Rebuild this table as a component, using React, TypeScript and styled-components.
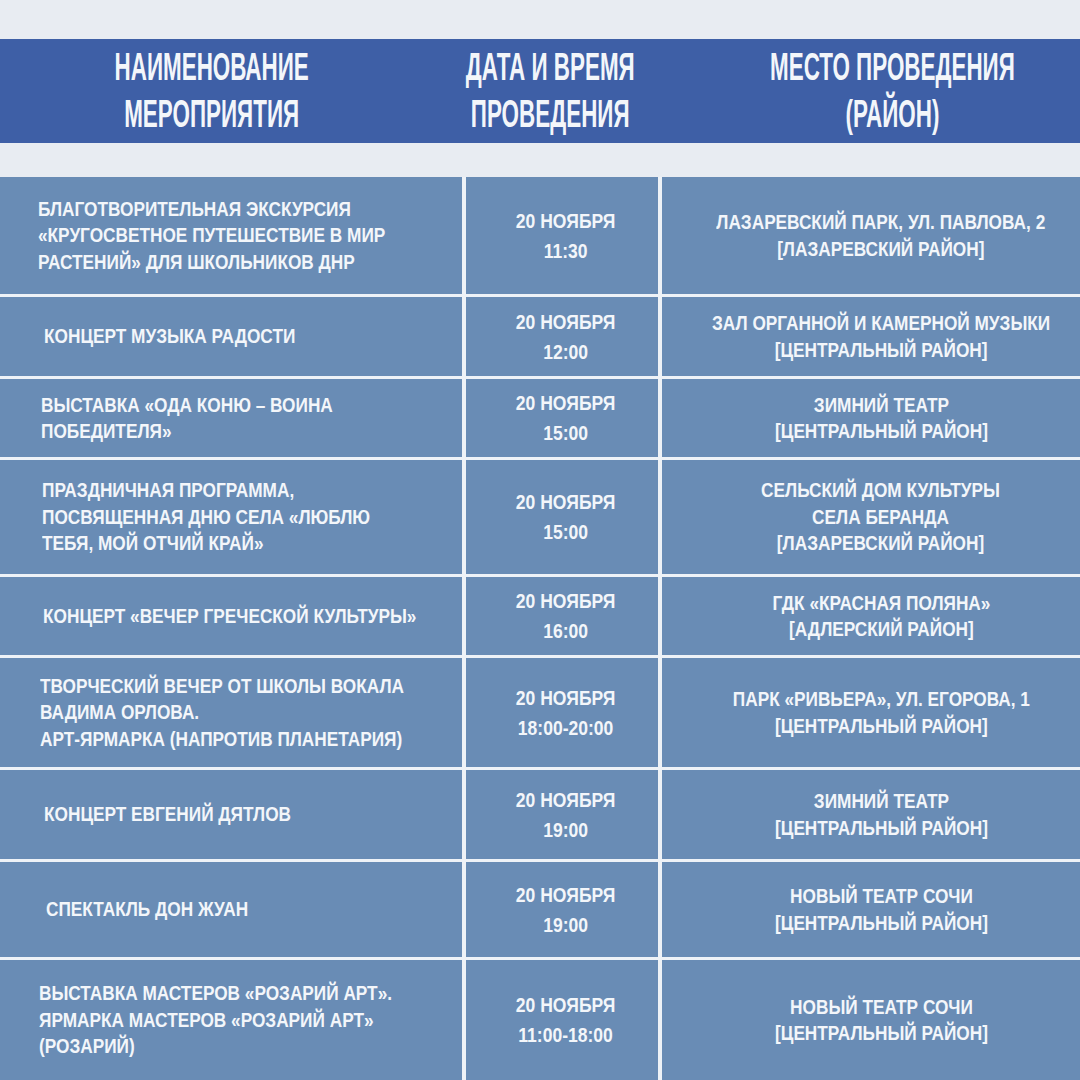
import styled, { createGlobalStyle } from "styled-components";

const GlobalStyle = createGlobalStyle`
  html, body {
    margin: 0;
    padding: 0;
    background: #e8ecf2;
  }
  body {
    width: 1080px;
    height: 1080px;
    overflow: hidden;
  }
`;

const SANS = `"Liberation Sans", Arial, sans-serif`;

const Page = styled.div`
  width: 1080px;
  height: 1080px;
  padding-top: 39px;
  box-sizing: border-box;
  background: #e8ecf2;
  font-family: ${SANS};
  color: #f3f6fa;
`;

const HeaderBand = styled.div`
  display: grid;
  grid-template-columns: 424px 252px minmax(0, 1fr);
  height: 104px;
  background: #3e5fa6;
`;

const HeaderCell = styled.div<{ $shift?: number }>`
  display: flex;
  align-items: center;
  justify-content: center;
  min-width: 0;
  padding-left: ${({ $shift }) => $shift ?? 0}px;
`;

const HeaderText = styled.span`
  display: inline-block;
  flex-shrink: 0;
  font-size: 38px;
  line-height: 47.5px;
  font-weight: 700;
  text-align: center;
  text-transform: uppercase;
  transform: scaleX(0.59);
  white-space: nowrap;
`;

const Table = styled.div`
  margin-top: 34px;
  display: grid;
  grid-template-columns: 462px 192px minmax(0, 1fr);
  column-gap: 4px;
  row-gap: 3px;
  background: #eef2f7;
`;

const Cell = styled.div<{ $h: number }>`
  height: ${({ $h }) => $h}px;
  min-width: 0;
  background: #698cb5;
  display: flex;
  align-items: center;
  box-sizing: border-box;
  font-weight: 700;
  font-size: 20px;
  white-space: nowrap;
`;

const NameCell = styled(Cell)<{ $indent: number }>`
  padding-left: ${({ $indent }) => $indent}px;
  line-height: 26.5px;
`;

const DateCell = styled(Cell)`
  justify-content: center;
  text-align: center;
  padding-left: 8px;
  font-size: 21px;
  line-height: 30px;
`;

const PlaceCell = styled(Cell)`
  justify-content: center;
  text-align: center;
  padding-left: 20px;
  line-height: 26.5px;
`;

const Narrow = styled.div<{ $origin: "left" | "center"; $scale: number }>`
  display: inline-block;
  flex-shrink: 0;
  transform: scaleX(${({ $scale }) => $scale});
  transform-origin: ${({ $origin }) => $origin} center;
`;

type Row = {
  h: number;
  indent: number;
  name: string[];
  date: string[];
  place: string[];
};

const rows: Row[] = [
  {
    h: 117,
    indent: 38,
    name: [
      "БЛАГОТВОРИТЕЛЬНАЯ ЭКСКУРСИЯ",
      "«КРУГОСВЕТНОЕ ПУТЕШЕСТВИЕ В МИР",
      "РАСТЕНИЙ» ДЛЯ ШКОЛЬНИКОВ ДНР",
    ],
    date: ["20 НОЯБРЯ", "11:30"],
    place: ["ЛАЗАРЕВСКИЙ ПАРК, УЛ. ПАВЛОВА, 2", "[ЛАЗАРЕВСКИЙ РАЙОН]"],
  },
  {
    h: 79,
    indent: 44,
    name: ["КОНЦЕРТ МУЗЫКА РАДОСТИ"],
    date: ["20 НОЯБРЯ", "12:00"],
    place: ["ЗАЛ ОРГАННОЙ И КАМЕРНОЙ МУЗЫКИ", "[ЦЕНТРАЛЬНЫЙ РАЙОН]"],
  },
  {
    h: 78,
    indent: 41,
    name: ["ВЫСТАВКА «ОДА КОНЮ – ВОИНА", "ПОБЕДИТЕЛЯ»"],
    date: ["20 НОЯБРЯ", "15:00"],
    place: ["ЗИМНИЙ ТЕАТР", "[ЦЕНТРАЛЬНЫЙ РАЙОН]"],
  },
  {
    h: 114,
    indent: 42,
    name: [
      "ПРАЗДНИЧНАЯ ПРОГРАММА,",
      "ПОСВЯЩЕННАЯ ДНЮ СЕЛА «ЛЮБЛЮ",
      "ТЕБЯ, МОЙ ОТЧИЙ КРАЙ»",
    ],
    date: ["20 НОЯБРЯ", "15:00"],
    place: ["СЕЛЬСКИЙ ДОМ КУЛЬТУРЫ", "СЕЛА БЕРАНДА", "[ЛАЗАРЕВСКИЙ РАЙОН]"],
  },
  {
    h: 78,
    indent: 43,
    name: ["КОНЦЕРТ «ВЕЧЕР ГРЕЧЕСКОЙ КУЛЬТУРЫ»"],
    date: ["20 НОЯБРЯ", "16:00"],
    place: ["ГДК «КРАСНАЯ ПОЛЯНА»", "[АДЛЕРСКИЙ РАЙОН]"],
  },
  {
    h: 109,
    indent: 40,
    name: [
      "ТВОРЧЕСКИЙ ВЕЧЕР ОТ ШКОЛЫ ВОКАЛА",
      "ВАДИМА ОРЛОВА.",
      "АРТ-ЯРМАРКА (НАПРОТИВ ПЛАНЕТАРИЯ)",
    ],
    date: ["20 НОЯБРЯ", "18:00-20:00"],
    place: ["ПАРК «РИВЬЕРА», УЛ. ЕГОРОВА, 1", "[ЦЕНТРАЛЬНЫЙ РАЙОН]"],
  },
  {
    h: 89,
    indent: 44,
    name: ["КОНЦЕРТ ЕВГЕНИЙ ДЯТЛОВ"],
    date: ["20 НОЯБРЯ", "19:00"],
    place: ["ЗИМНИЙ ТЕАТР", "[ЦЕНТРАЛЬНЫЙ РАЙОН]"],
  },
  {
    h: 95,
    indent: 46,
    name: ["СПЕКТАКЛЬ ДОН ЖУАН"],
    date: ["20 НОЯБРЯ", "19:00"],
    place: ["НОВЫЙ ТЕАТР СОЧИ", "[ЦЕНТРАЛЬНЫЙ РАЙОН]"],
  },
  {
    h: 120,
    indent: 39,
    name: [
      "ВЫСТАВКА МАСТЕРОВ «РОЗАРИЙ АРТ».",
      "ЯРМАРКА МАСТЕРОВ «РОЗАРИЙ АРТ»",
      "(РОЗАРИЙ)",
    ],
    date: ["20 НОЯБРЯ", "11:00-18:00"],
    place: ["НОВЫЙ ТЕАТР СОЧИ", "[ЦЕНТРАЛЬНЫЙ РАЙОН]"],
  },
];

const Lines = ({
  items,
  origin,
  scale = 0.862,
}: {
  items: string[];
  origin: "left" | "center";
  scale?: number;
}) => (
  <Narrow $origin={origin} $scale={scale}>
    {items.map((t, i) => (
      <div key={i}>{t}</div>
    ))}
  </Narrow>
);

const App = () => {
  return (
    <Page>
      <GlobalStyle />
      <HeaderBand>
        <HeaderCell>
          <HeaderText>
            Наименование
            <br />
            мероприятия
          </HeaderText>
        </HeaderCell>
        <HeaderCell>
          <HeaderText>
            Дата и время
            <br />
            проведения
          </HeaderText>
        </HeaderCell>
        <HeaderCell $shift={28}>
          <HeaderText>
            Место проведения
            <br />
            (район)
          </HeaderText>
        </HeaderCell>
      </HeaderBand>
      <Table>
        {rows.map((r, i) => [
          <NameCell key={`n${i}`} $h={r.h} $indent={r.indent}>
            <Lines items={r.name} origin="left" />
          </NameCell>,
          <DateCell key={`d${i}`} $h={r.h}>
            <Lines items={r.date} origin="center" scale={0.835} />
          </DateCell>,
          <PlaceCell key={`p${i}`} $h={r.h}>
            <Lines items={r.place} origin="center" />
          </PlaceCell>,
        ])}
      </Table>
    </Page>
  );
};

export default App;
